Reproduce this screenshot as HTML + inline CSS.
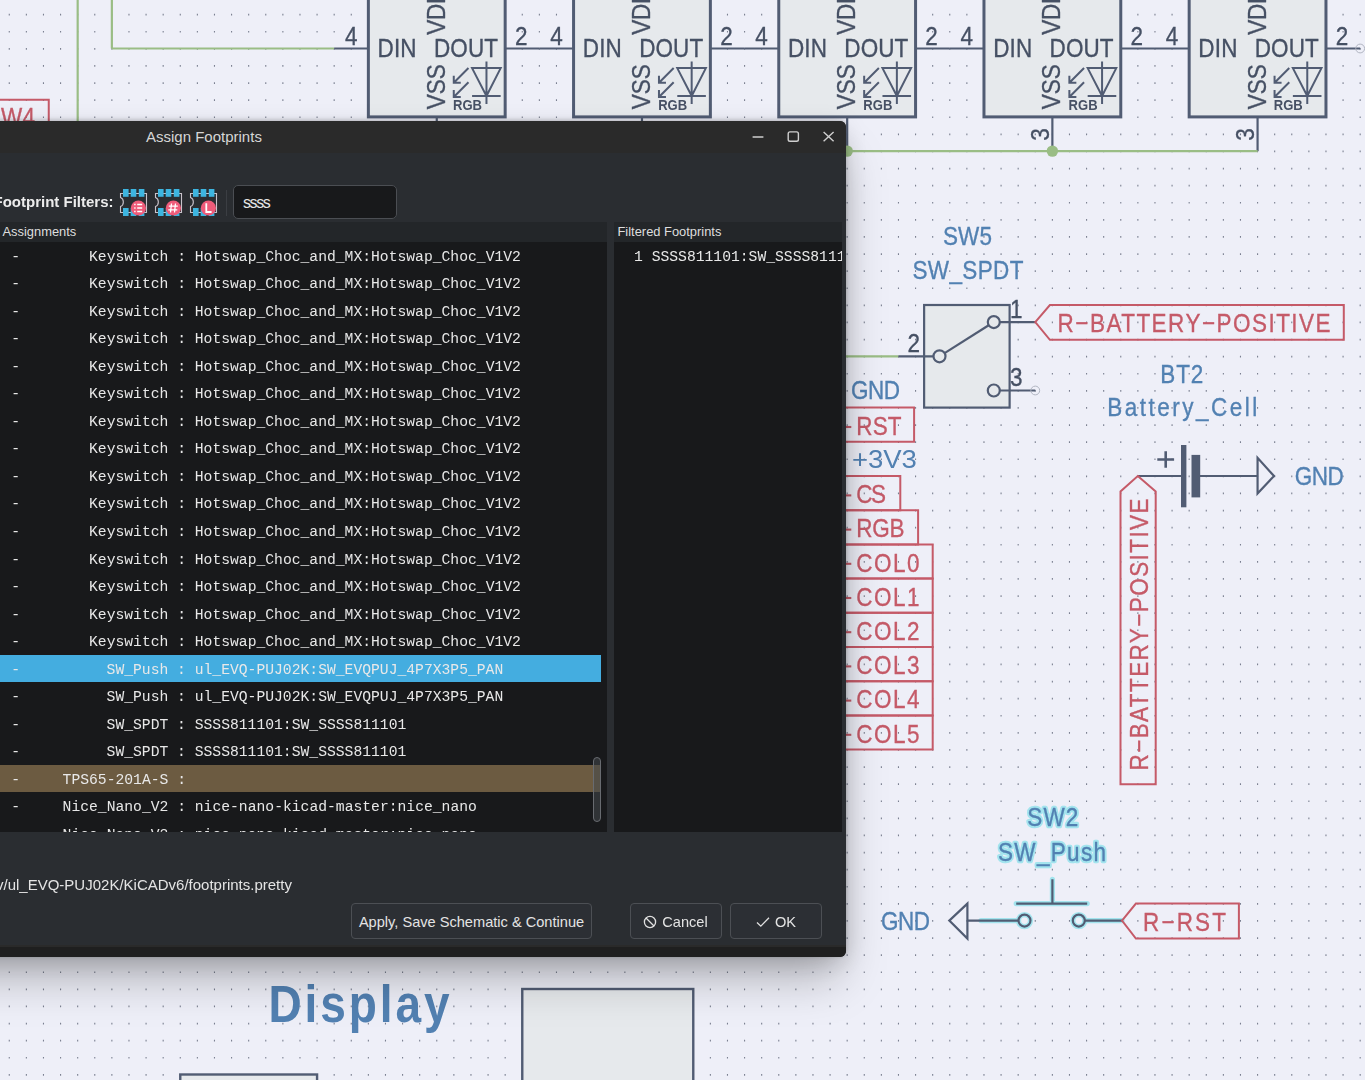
<!DOCTYPE html><html><head><meta charset="utf-8"><style>
html,body{margin:0;padding:0;width:1365px;height:1080px;overflow:hidden;background:#eeeff8;font-family:"Liberation Sans", sans-serif}
#shadow{position:absolute;left:-440px;top:125px;width:1285px;height:832px;box-shadow:0 26px 44px -6px rgba(0,0,0,0.27), 0 4px 26px 0 rgba(0,0,0,0.17);border-radius:6px}
#dlg{position:absolute;left:-436px;top:121.3px;width:1281.8px;height:836.2px;background:#2a2d31;box-shadow:0 -1px 4px rgba(0,0,0,0.22);border-radius:6px 6px 6px 6px;overflow:hidden}
#title{position:absolute;left:0;top:0;width:100%;height:31.3px;background:#2a2a2a;color:#d6d6d6;font-size:15px;line-height:31.3px}
#title{text-indent:582px}
#body{position:absolute;left:436px;top:31.3px;width:845.8px;height:793.7px;background:#2a2d31}
#bottomband{position:absolute;left:0;top:823.6px;width:100%;height:12.6px;background:#1f1f1f;border-top:2px solid #2a2a2a;box-sizing:border-box}
#fflabel{position:absolute;right:732.3px;top:161px;font-weight:700;font-size:15px;color:#ececec;white-space:nowrap}
#fflabel{top:40.7px}
#sep{position:absolute;left:225.7px;top:37px;width:1px;height:26.5px;background:#3b3e43}
#search{position:absolute;left:232.9px;top:32.9px;width:163.7px;height:33.7px;box-sizing:border-box;border:1px solid #4b4e53;border-radius:5px;background:#18191b;color:#e6e6e6;font-size:16px;letter-spacing:-1.35px;line-height:33px;padding-left:9px}
#lpanel{position:absolute;left:-10px;top:69.4px;width:616.9px;height:609.8px;background:#18191b;overflow:hidden}
#rpanel{position:absolute;left:613.5px;top:69.4px;width:228.8px;height:609.8px;background:#18191b;overflow:hidden}
.hdr{position:absolute;left:0;top:0;right:0;height:19.7px;background:#232629;color:#dedede;font-size:12.9px;line-height:20px;padding-left:12.5px;white-space:nowrap}
.list{position:absolute;left:0;top:19.7px;right:0;bottom:0;overflow:hidden}
.row{position:absolute;left:0;right:0;height:27.6px;font-family:"Liberation Mono", monospace;font-size:14.7px;line-height:30.4px;color:#e8e8e8;white-space:pre}
#lpanel .row{left:0}
.dash{position:absolute;left:21.3px}
.val{position:absolute;right:410.9px;text-align:right}
.fp{position:absolute;left:204.5px}
#sbar{position:absolute;left:603.2px;top:515.8px;width:7.6px;height:65px;border:1px solid #686b70;border-radius:5px;background:rgba(70,73,77,0.55);box-sizing:border-box}
#path{position:absolute;left:-4px;top:723.9px;color:#e4e4e4;font-size:15px;white-space:nowrap}
.btn{position:absolute;top:750.4px;height:36.5px;box-sizing:border-box;border:1px solid #4c4f54;border-radius:4px;background:#2c2f34;color:#e4e4e4;font-size:14.6px;line-height:37px;text-align:center;white-space:nowrap}
</style></head><body><svg width="1365" height="1080" viewBox="0 0 1365 1080" style="position:absolute;left:0;top:0;will-change:transform" font-family="Liberation Sans, sans-serif"><defs><filter id="glow" x="-20%" y="-50%" width="140%" height="200%">
<feMorphology in="SourceAlpha" operator="dilate" radius="2" result="d"/>
<feGaussianBlur in="d" stdDeviation="0.8" result="b"/>
<feFlood flood-color="#86dcef"/><feComposite in2="b" operator="in" result="g"/>
<feMerge><feMergeNode in="g"/><feMergeNode in="SourceGraphic"/></feMerge></filter></defs><path d="M8.72 14.65H1366M8.72 31.75H1366M8.72 48.85H1366M8.72 65.95H1366M8.72 83.05H1366M8.72 100.15H1366M8.72 117.25H1366M8.72 134.35H1366M8.72 151.45H1366M8.72 168.55H1366M8.72 185.65H1366M8.72 202.75H1366M8.72 219.85H1366M8.72 236.95H1366M8.72 254.05H1366M8.72 271.15H1366M8.72 288.25H1366M8.72 305.35H1366M8.72 322.45H1366M8.72 339.55H1366M8.72 356.65H1366M8.72 373.75H1366M8.72 390.85H1366M8.72 407.95H1366M8.72 425.05H1366M8.72 442.15H1366M8.72 459.25H1366M8.72 476.35H1366M8.72 493.45H1366M8.72 510.55H1366M8.72 527.65H1366M8.72 544.75H1366M8.72 561.85H1366M8.72 578.95H1366M8.72 596.05H1366M8.72 613.15H1366M8.72 630.25H1366M8.72 647.35H1366M8.72 664.45H1366M8.72 681.55H1366M8.72 698.65H1366M8.72 715.75H1366M8.72 732.85H1366M8.72 749.95H1366M8.72 767.05H1366M8.72 784.15H1366M8.72 801.25H1366M8.72 818.35H1366M8.72 835.45H1366M8.72 852.55H1366M8.72 869.65H1366M8.72 886.75H1366M8.72 903.85H1366M8.72 920.95H1366M8.72 938.05H1366M8.72 955.15H1366M8.72 972.25H1366M8.72 989.35H1366M8.72 1006.45H1366M8.72 1023.55H1366M8.72 1040.65H1366M8.72 1057.75H1366M8.72 1074.85H1366M8.72 1091.95H1366" stroke="#7b8091" stroke-width="1.7" stroke-dasharray="1.1 16" fill="none"/><line x1="77.67" y1="-5" x2="77.67" y2="125" stroke="#9abd85" stroke-width="2.2" /><line x1="111.87" y1="-5" x2="111.87" y2="48.5" stroke="#9abd85" stroke-width="2.2" /><line x1="111.87" y1="48.5" x2="334.17" y2="48.5" stroke="#9abd85" stroke-width="2.2" /><path d="M-10 99.8H48.75V130" stroke="#c55a68" stroke-width="2" fill="none"/><text x="0" y="0" font-size="22.5" fill="#c55a68" textLength="34" lengthAdjust="spacing" stroke="#c55a68" stroke-width="0.3" transform="translate(1 126) scale(1 1.17)" >W4</text><rect x="368.37" y="-20" width="136.8" height="136.9" fill="#e6e9ec" stroke="#515c73" stroke-width="3"/><line x1="334.17" y1="48.5" x2="368.37" y2="48.5" stroke="#515c73" stroke-width="2.2" /><line x1="505.17" y1="48.5" x2="539.37" y2="48.5" stroke="#515c73" stroke-width="2.2" /><line x1="436.77" y1="116.9" x2="436.77" y2="151.1" stroke="#515c73" stroke-width="2.2" /><text x="0" y="0" font-size="22.5" fill="#465064" textLength="14" lengthAdjust="spacing" stroke="#465064" stroke-width="0.3" transform="translate(344.97 44.7) scale(1 1.17)" >4</text><text x="0" y="0" font-size="22.5" fill="#465064" textLength="14" lengthAdjust="spacing" stroke="#465064" stroke-width="0.3" transform="translate(514.97 44.7) scale(1 1.17)" >2</text><text x="0" y="0" font-size="22.5" fill="#465064" textLength="39" lengthAdjust="spacing" stroke="#465064" stroke-width="0.3" transform="translate(377.57 57.1) scale(1 1.17)" >DIN</text><text x="0" y="0" font-size="22.5" fill="#465064" textLength="64" lengthAdjust="spacing" stroke="#465064" stroke-width="0.3" transform="translate(433.97 57.1) scale(1 1.17)" >DOUT</text><text x="0" y="0" font-size="22.5" fill="#465064" textLength="47" lengthAdjust="spacing" stroke="#465064" stroke-width="0.3" transform="translate(444.77 34.7) rotate(-90) scale(1 1.17)" >VDD</text><text x="0" y="0" font-size="22.5" fill="#465064" textLength="45" lengthAdjust="spacing" stroke="#465064" stroke-width="0.3" transform="translate(444.77 109.2) rotate(-90) scale(1 1.17)" >VSS</text><text x="0" y="0" font-size="22.5" fill="#465064" textLength="13" lengthAdjust="spacing" stroke="#465064" stroke-width="0.3" transform="translate(433.57 140.7) rotate(-90) scale(1 1.17)" >3</text><path d="M472.07 68.1H500.67L486.47 96ZM472.07 96H500.67M486.47 61.5V104" stroke="#515c73" stroke-width="2" fill="none"/><path d="M468.47 68L453.77 82.8M453.77 75.8L453.77 82.8L460.77 82.8" stroke="#515c73" stroke-width="2" fill="none"/><path d="M468.47 82.2L453.77 97M453.77 90L453.77 97L460.77 97" stroke="#515c73" stroke-width="2" fill="none"/><text x="452.97" y="110" font-size="15" fill="#465064" textLength="29" lengthAdjust="spacingAndGlyphs" font-weight="700" >RGB</text><rect x="573.57" y="-20" width="136.8" height="136.9" fill="#e6e9ec" stroke="#515c73" stroke-width="3"/><line x1="539.37" y1="48.5" x2="573.57" y2="48.5" stroke="#515c73" stroke-width="2.2" /><line x1="710.37" y1="48.5" x2="744.57" y2="48.5" stroke="#515c73" stroke-width="2.2" /><line x1="641.97" y1="116.9" x2="641.97" y2="151.1" stroke="#515c73" stroke-width="2.2" /><text x="0" y="0" font-size="22.5" fill="#465064" textLength="14" lengthAdjust="spacing" stroke="#465064" stroke-width="0.3" transform="translate(550.17 44.7) scale(1 1.17)" >4</text><text x="0" y="0" font-size="22.5" fill="#465064" textLength="14" lengthAdjust="spacing" stroke="#465064" stroke-width="0.3" transform="translate(720.17 44.7) scale(1 1.17)" >2</text><text x="0" y="0" font-size="22.5" fill="#465064" textLength="39" lengthAdjust="spacing" stroke="#465064" stroke-width="0.3" transform="translate(582.77 57.1) scale(1 1.17)" >DIN</text><text x="0" y="0" font-size="22.5" fill="#465064" textLength="64" lengthAdjust="spacing" stroke="#465064" stroke-width="0.3" transform="translate(639.17 57.1) scale(1 1.17)" >DOUT</text><text x="0" y="0" font-size="22.5" fill="#465064" textLength="47" lengthAdjust="spacing" stroke="#465064" stroke-width="0.3" transform="translate(649.97 34.7) rotate(-90) scale(1 1.17)" >VDD</text><text x="0" y="0" font-size="22.5" fill="#465064" textLength="45" lengthAdjust="spacing" stroke="#465064" stroke-width="0.3" transform="translate(649.97 109.2) rotate(-90) scale(1 1.17)" >VSS</text><text x="0" y="0" font-size="22.5" fill="#465064" textLength="13" lengthAdjust="spacing" stroke="#465064" stroke-width="0.3" transform="translate(638.77 140.7) rotate(-90) scale(1 1.17)" >3</text><path d="M677.27 68.1H705.87L691.67 96ZM677.27 96H705.87M691.67 61.5V104" stroke="#515c73" stroke-width="2" fill="none"/><path d="M673.67 68L658.97 82.8M658.97 75.8L658.97 82.8L665.97 82.8" stroke="#515c73" stroke-width="2" fill="none"/><path d="M673.67 82.2L658.97 97M658.97 90L658.97 97L665.97 97" stroke="#515c73" stroke-width="2" fill="none"/><text x="658.17" y="110" font-size="15" fill="#465064" textLength="29" lengthAdjust="spacingAndGlyphs" font-weight="700" >RGB</text><rect x="778.77" y="-20" width="136.8" height="136.9" fill="#e6e9ec" stroke="#515c73" stroke-width="3"/><line x1="744.57" y1="48.5" x2="778.77" y2="48.5" stroke="#515c73" stroke-width="2.2" /><line x1="915.57" y1="48.5" x2="949.77" y2="48.5" stroke="#515c73" stroke-width="2.2" /><line x1="847.17" y1="116.9" x2="847.17" y2="151.1" stroke="#515c73" stroke-width="2.2" /><text x="0" y="0" font-size="22.5" fill="#465064" textLength="14" lengthAdjust="spacing" stroke="#465064" stroke-width="0.3" transform="translate(755.37 44.7) scale(1 1.17)" >4</text><text x="0" y="0" font-size="22.5" fill="#465064" textLength="14" lengthAdjust="spacing" stroke="#465064" stroke-width="0.3" transform="translate(925.37 44.7) scale(1 1.17)" >2</text><text x="0" y="0" font-size="22.5" fill="#465064" textLength="39" lengthAdjust="spacing" stroke="#465064" stroke-width="0.3" transform="translate(787.97 57.1) scale(1 1.17)" >DIN</text><text x="0" y="0" font-size="22.5" fill="#465064" textLength="64" lengthAdjust="spacing" stroke="#465064" stroke-width="0.3" transform="translate(844.37 57.1) scale(1 1.17)" >DOUT</text><text x="0" y="0" font-size="22.5" fill="#465064" textLength="47" lengthAdjust="spacing" stroke="#465064" stroke-width="0.3" transform="translate(855.17 34.7) rotate(-90) scale(1 1.17)" >VDD</text><text x="0" y="0" font-size="22.5" fill="#465064" textLength="45" lengthAdjust="spacing" stroke="#465064" stroke-width="0.3" transform="translate(855.17 109.2) rotate(-90) scale(1 1.17)" >VSS</text><text x="0" y="0" font-size="22.5" fill="#465064" textLength="13" lengthAdjust="spacing" stroke="#465064" stroke-width="0.3" transform="translate(843.97 140.7) rotate(-90) scale(1 1.17)" >3</text><path d="M882.47 68.1H911.07L896.87 96ZM882.47 96H911.07M896.87 61.5V104" stroke="#515c73" stroke-width="2" fill="none"/><path d="M878.87 68L864.17 82.8M864.17 75.8L864.17 82.8L871.17 82.8" stroke="#515c73" stroke-width="2" fill="none"/><path d="M878.87 82.2L864.17 97M864.17 90L864.17 97L871.17 97" stroke="#515c73" stroke-width="2" fill="none"/><text x="863.37" y="110" font-size="15" fill="#465064" textLength="29" lengthAdjust="spacingAndGlyphs" font-weight="700" >RGB</text><rect x="983.97" y="-20" width="136.8" height="136.9" fill="#e6e9ec" stroke="#515c73" stroke-width="3"/><line x1="949.77" y1="48.5" x2="983.97" y2="48.5" stroke="#515c73" stroke-width="2.2" /><line x1="1120.77" y1="48.5" x2="1154.97" y2="48.5" stroke="#515c73" stroke-width="2.2" /><line x1="1052.37" y1="116.9" x2="1052.37" y2="151.1" stroke="#515c73" stroke-width="2.2" /><text x="0" y="0" font-size="22.5" fill="#465064" textLength="14" lengthAdjust="spacing" stroke="#465064" stroke-width="0.3" transform="translate(960.57 44.7) scale(1 1.17)" >4</text><text x="0" y="0" font-size="22.5" fill="#465064" textLength="14" lengthAdjust="spacing" stroke="#465064" stroke-width="0.3" transform="translate(1130.57 44.7) scale(1 1.17)" >2</text><text x="0" y="0" font-size="22.5" fill="#465064" textLength="39" lengthAdjust="spacing" stroke="#465064" stroke-width="0.3" transform="translate(993.17 57.1) scale(1 1.17)" >DIN</text><text x="0" y="0" font-size="22.5" fill="#465064" textLength="64" lengthAdjust="spacing" stroke="#465064" stroke-width="0.3" transform="translate(1049.57 57.1) scale(1 1.17)" >DOUT</text><text x="0" y="0" font-size="22.5" fill="#465064" textLength="47" lengthAdjust="spacing" stroke="#465064" stroke-width="0.3" transform="translate(1060.37 34.7) rotate(-90) scale(1 1.17)" >VDD</text><text x="0" y="0" font-size="22.5" fill="#465064" textLength="45" lengthAdjust="spacing" stroke="#465064" stroke-width="0.3" transform="translate(1060.37 109.2) rotate(-90) scale(1 1.17)" >VSS</text><text x="0" y="0" font-size="22.5" fill="#465064" textLength="13" lengthAdjust="spacing" stroke="#465064" stroke-width="0.3" transform="translate(1049.17 140.7) rotate(-90) scale(1 1.17)" >3</text><path d="M1087.67 68.1H1116.27L1102.07 96ZM1087.67 96H1116.27M1102.07 61.5V104" stroke="#515c73" stroke-width="2" fill="none"/><path d="M1084.07 68L1069.37 82.8M1069.37 75.8L1069.37 82.8L1076.37 82.8" stroke="#515c73" stroke-width="2" fill="none"/><path d="M1084.07 82.2L1069.37 97M1069.37 90L1069.37 97L1076.37 97" stroke="#515c73" stroke-width="2" fill="none"/><text x="1068.57" y="110" font-size="15" fill="#465064" textLength="29" lengthAdjust="spacingAndGlyphs" font-weight="700" >RGB</text><rect x="1189.17" y="-20" width="136.8" height="136.9" fill="#e6e9ec" stroke="#515c73" stroke-width="3"/><line x1="1154.97" y1="48.5" x2="1189.17" y2="48.5" stroke="#515c73" stroke-width="2.2" /><line x1="1325.97" y1="48.5" x2="1360.17" y2="48.5" stroke="#515c73" stroke-width="2.2" /><line x1="1257.57" y1="116.9" x2="1257.57" y2="151.1" stroke="#515c73" stroke-width="2.2" /><text x="0" y="0" font-size="22.5" fill="#465064" textLength="14" lengthAdjust="spacing" stroke="#465064" stroke-width="0.3" transform="translate(1165.77 44.7) scale(1 1.17)" >4</text><text x="0" y="0" font-size="22.5" fill="#465064" textLength="14" lengthAdjust="spacing" stroke="#465064" stroke-width="0.3" transform="translate(1335.77 44.7) scale(1 1.17)" >2</text><text x="0" y="0" font-size="22.5" fill="#465064" textLength="39" lengthAdjust="spacing" stroke="#465064" stroke-width="0.3" transform="translate(1198.37 57.1) scale(1 1.17)" >DIN</text><text x="0" y="0" font-size="22.5" fill="#465064" textLength="64" lengthAdjust="spacing" stroke="#465064" stroke-width="0.3" transform="translate(1254.77 57.1) scale(1 1.17)" >DOUT</text><text x="0" y="0" font-size="22.5" fill="#465064" textLength="47" lengthAdjust="spacing" stroke="#465064" stroke-width="0.3" transform="translate(1265.57 34.7) rotate(-90) scale(1 1.17)" >VDD</text><text x="0" y="0" font-size="22.5" fill="#465064" textLength="45" lengthAdjust="spacing" stroke="#465064" stroke-width="0.3" transform="translate(1265.57 109.2) rotate(-90) scale(1 1.17)" >VSS</text><text x="0" y="0" font-size="22.5" fill="#465064" textLength="13" lengthAdjust="spacing" stroke="#465064" stroke-width="0.3" transform="translate(1254.37 140.7) rotate(-90) scale(1 1.17)" >3</text><path d="M1292.87 68.1H1321.47L1307.27 96ZM1292.87 96H1321.47M1307.27 61.5V104" stroke="#515c73" stroke-width="2" fill="none"/><path d="M1289.27 68L1274.57 82.8M1274.57 75.8L1274.57 82.8L1281.57 82.8" stroke="#515c73" stroke-width="2" fill="none"/><path d="M1289.27 82.2L1274.57 97M1274.57 90L1274.57 97L1281.57 97" stroke="#515c73" stroke-width="2" fill="none"/><text x="1273.77" y="110" font-size="15" fill="#465064" textLength="29" lengthAdjust="spacingAndGlyphs" font-weight="700" >RGB</text><line x1="800" y1="151.1" x2="1257.57" y2="151.1" stroke="#9abd85" stroke-width="2.4" /><circle cx="847.17" cy="151.1" r="5.7" fill="#9abd85"/><circle cx="1052.37" cy="151.1" r="5.7" fill="#9abd85"/><circle cx="1360.17" cy="48.5" r="4.4" fill="none" stroke="#b0b4c0" stroke-width="1"/><text x="0" y="0" font-size="22.5" fill="#5281b2" textLength="49" lengthAdjust="spacing" stroke="#5281b2" stroke-width="0.3" transform="translate(942.9 245.3) scale(1 1.17)" >SW5</text><text x="0" y="0" font-size="22.5" fill="#5281b2" textLength="111" lengthAdjust="spacing" stroke="#5281b2" stroke-width="0.3" transform="translate(912.4 279) scale(1 1.17)" >SW_SPDT</text><rect x="924.12" y="305" width="85.5" height="102.6" fill="#e6e9ec" stroke="#515c73" stroke-width="2.2"/><line x1="800" y1="356.3" x2="898.47" y2="356.3" stroke="#9abd85" stroke-width="2.2" /><line x1="898.47" y1="356.3" x2="933.5" y2="356.3" stroke="#515c73" stroke-width="2.2" /><circle cx="939.5" cy="356.3" r="6" fill="none" stroke="#515c73" stroke-width="2.2"/><circle cx="993.8" cy="322.1" r="6" fill="none" stroke="#515c73" stroke-width="2.2"/><circle cx="993.8" cy="390.5" r="6" fill="none" stroke="#515c73" stroke-width="2.2"/><line x1="999.8" y1="322.1" x2="1035.27" y2="322.1" stroke="#515c73" stroke-width="2.2" /><line x1="999.8" y1="390.5" x2="1035.27" y2="390.5" stroke="#515c73" stroke-width="2.2" /><line x1="944.6" y1="353.1" x2="988.7" y2="325.3" stroke="#515c73" stroke-width="2.2" /><circle cx="1035.27" cy="390.5" r="4.4" fill="none" stroke="#b0b4c0" stroke-width="1"/><text x="0" y="0" font-size="22.5" fill="#465064" textLength="14" lengthAdjust="spacing" stroke="#465064" stroke-width="0.3" transform="translate(1010 318) scale(1 1.17)" >1</text><text x="0" y="0" font-size="22.5" fill="#465064" textLength="14" lengthAdjust="spacing" stroke="#465064" stroke-width="0.3" transform="translate(907.5 352) scale(1 1.17)" >2</text><text x="0" y="0" font-size="22.5" fill="#465064" textLength="14" lengthAdjust="spacing" stroke="#465064" stroke-width="0.3" transform="translate(1010 386) scale(1 1.17)" >3</text><text x="0" y="0" font-size="22.5" fill="#5281b2" textLength="49" lengthAdjust="spacing" stroke="#5281b2" stroke-width="0.3" transform="translate(851 398.7) scale(1 1.17)" >GND</text><path d="M1035.27 322.1L1049.9 305H1343.8V339.8H1049.9Z" fill="none" stroke="#c55a68" stroke-width="2"/><text x="0" y="0" font-size="22.5" fill="#c55a68" textLength="273" lengthAdjust="spacing" stroke="#c55a68" stroke-width="0.3" transform="translate(1057.6 332.4) scale(1 1.17)" >R−BATTERY−POSITIVE</text><path d="M800 407.6H914.1V441.8H800" fill="none" stroke="#c55a68" stroke-width="2"/><line x1="836.5" y1="427" x2="851.3" y2="427" stroke="#c55a68" stroke-width="2.1" /><text x="0" y="0" font-size="22.5" fill="#c55a68" textLength="45.3" lengthAdjust="spacing" stroke="#c55a68" stroke-width="0.3" transform="translate(856.3 434.8) scale(1 1.17)" >RST</text><path d="M800 476H900.3V510.2H800" fill="none" stroke="#c55a68" stroke-width="2"/><line x1="836.5" y1="495.4" x2="851.3" y2="495.4" stroke="#c55a68" stroke-width="2.1" /><text x="0" y="0" font-size="22.5" fill="#c55a68" textLength="29.7" lengthAdjust="spacing" stroke="#c55a68" stroke-width="0.3" transform="translate(856.3 503.2) scale(1 1.17)" >CS</text><path d="M800 510.2H918.1V544.4H800" fill="none" stroke="#c55a68" stroke-width="2"/><line x1="836.5" y1="529.6" x2="851.3" y2="529.6" stroke="#c55a68" stroke-width="2.1" /><text x="0" y="0" font-size="22.5" fill="#c55a68" textLength="48.3" lengthAdjust="spacing" stroke="#c55a68" stroke-width="0.3" transform="translate(856.3 537.4) scale(1 1.17)" >RGB</text><path d="M800 544.4H932.7V578.6H800" fill="none" stroke="#c55a68" stroke-width="2"/><line x1="836.5" y1="563.8" x2="851.3" y2="563.8" stroke="#c55a68" stroke-width="2.1" /><text x="0" y="0" font-size="22.5" fill="#c55a68" textLength="63.1" lengthAdjust="spacing" stroke="#c55a68" stroke-width="0.3" transform="translate(856.3 571.6) scale(1 1.17)" >COL0</text><path d="M800 578.6H932.7V612.8H800" fill="none" stroke="#c55a68" stroke-width="2"/><line x1="836.5" y1="598" x2="851.3" y2="598" stroke="#c55a68" stroke-width="2.1" /><text x="0" y="0" font-size="22.5" fill="#c55a68" textLength="63.1" lengthAdjust="spacing" stroke="#c55a68" stroke-width="0.3" transform="translate(856.3 605.8) scale(1 1.17)" >COL1</text><path d="M800 612.8H932.7V647H800" fill="none" stroke="#c55a68" stroke-width="2"/><line x1="836.5" y1="632.2" x2="851.3" y2="632.2" stroke="#c55a68" stroke-width="2.1" /><text x="0" y="0" font-size="22.5" fill="#c55a68" textLength="63.1" lengthAdjust="spacing" stroke="#c55a68" stroke-width="0.3" transform="translate(856.3 640) scale(1 1.17)" >COL2</text><path d="M800 647H932.7V681.2H800" fill="none" stroke="#c55a68" stroke-width="2"/><line x1="836.5" y1="666.4" x2="851.3" y2="666.4" stroke="#c55a68" stroke-width="2.1" /><text x="0" y="0" font-size="22.5" fill="#c55a68" textLength="63.1" lengthAdjust="spacing" stroke="#c55a68" stroke-width="0.3" transform="translate(856.3 674.2) scale(1 1.17)" >COL3</text><path d="M800 681.2H932.7V715.4H800" fill="none" stroke="#c55a68" stroke-width="2"/><line x1="836.5" y1="700.6" x2="851.3" y2="700.6" stroke="#c55a68" stroke-width="2.1" /><text x="0" y="0" font-size="22.5" fill="#c55a68" textLength="63.1" lengthAdjust="spacing" stroke="#c55a68" stroke-width="0.3" transform="translate(856.3 708.4) scale(1 1.17)" >COL4</text><path d="M800 715.4H932.7V749.6H800" fill="none" stroke="#c55a68" stroke-width="2"/><line x1="836.5" y1="734.8" x2="851.3" y2="734.8" stroke="#c55a68" stroke-width="2.1" /><text x="0" y="0" font-size="22.5" fill="#c55a68" textLength="63.1" lengthAdjust="spacing" stroke="#c55a68" stroke-width="0.3" transform="translate(856.3 742.6) scale(1 1.17)" >COL5</text><text x="851.9" y="467.5" font-size="26" fill="#5281b2" textLength="65" lengthAdjust="spacingAndGlyphs" >+3V3</text><text x="0" y="0" font-size="22.5" fill="#5281b2" textLength="43" lengthAdjust="spacing" stroke="#5281b2" stroke-width="0.3" transform="translate(1160.3 382.7) scale(1 1.17)" >BT2</text><text x="0" y="0" font-size="22.5" fill="#5281b2" textLength="150" lengthAdjust="spacing" stroke="#5281b2" stroke-width="0.3" transform="translate(1107.3 416.3) scale(1 1.17)" >Battery_Cell</text><line x1="1137.87" y1="476" x2="1181" y2="476" stroke="#515c73" stroke-width="2.2" /><rect x="1181" y="445" width="5.4" height="62.3" fill="#515c73"/><rect x="1191.5" y="454.9" width="8.7" height="42.5" fill="#515c73"/><line x1="1200" y1="476" x2="1257.57" y2="476" stroke="#515c73" stroke-width="2.2" /><path d="M1257.57 457.8V493.4L1274 476Z" fill="none" stroke="#515c73" stroke-width="2.2" stroke-linejoin="miter"/><path d="M1157.3 459.5H1174.1M1165.7 451.3V467.7" stroke="#515c73" stroke-width="2.6"/><text x="0" y="0" font-size="22.5" fill="#5281b2" textLength="49" lengthAdjust="spacing" stroke="#5281b2" stroke-width="0.3" transform="translate(1294.8 484.5) scale(1 1.17)" >GND</text><path d="M1137.8 476L1155.7 491.5V784.3H1120.5V491.5Z" fill="none" stroke="#c55a68" stroke-width="2"/><text x="0" y="0" font-size="22.5" fill="#c55a68" textLength="272" lengthAdjust="spacing" stroke="#c55a68" stroke-width="0.3" transform="translate(1147.6 770.5) rotate(-90) scale(1 1.17)" >R−BATTERY−POSITIVE</text><path d="M949.3 920.6L967.4 903.6V938.6Z" fill="none" stroke="#515c73" stroke-width="2.2"/><g stroke="#a3e4ee" stroke-width="5.2" fill="none" stroke-linecap="round"><path d="M981 920.6H1018.5M1084.8 920.6H1122M1016.2 903.6H1087.2M1052.4 879.3V903.6"/><circle cx="1024.5" cy="920.6" r="6"/><circle cx="1078.8" cy="920.6" r="6"/></g><g stroke="#515c73" stroke-width="2.2" fill="none"><path d="M967.4 920.6H1018.5M1084.8 920.6H1122M1016.2 903.6H1087.2M1052.4 879.3V903.6"/><circle cx="1024.5" cy="920.6" r="6"/><circle cx="1078.8" cy="920.6" r="6"/></g><text x="0" y="0" font-size="22.5" fill="#5281b2" textLength="51" lengthAdjust="spacing" transform="translate(1027.3 826) scale(1 1.17)" stroke="#a3e4ee" stroke-width="4" stroke-linejoin="round">SW2</text><text x="0" y="0" font-size="22.5" fill="#5281b2" textLength="108" lengthAdjust="spacing" transform="translate(998 860.7) scale(1 1.17)" stroke="#a3e4ee" stroke-width="4" stroke-linejoin="round">SW_Push</text><text x="0" y="0" font-size="22.5" fill="#5281b2" textLength="51" lengthAdjust="spacing" stroke="#5281b2" stroke-width="0.3" transform="translate(1027.3 826) scale(1 1.17)" >SW2</text><text x="0" y="0" font-size="22.5" fill="#5281b2" textLength="108" lengthAdjust="spacing" stroke="#5281b2" stroke-width="0.3" transform="translate(998 860.7) scale(1 1.17)" >SW_Push</text><text x="0" y="0" font-size="22.5" fill="#5281b2" textLength="49" lengthAdjust="spacing" stroke="#5281b2" stroke-width="0.3" transform="translate(881 929.5) scale(1 1.17)" >GND</text><path d="M1122 920.6L1135.9 903.6H1238.9V938.6H1135.9Z" fill="none" stroke="#c55a68" stroke-width="2"/><text x="0" y="0" font-size="22.5" fill="#c55a68" textLength="83" lengthAdjust="spacing" stroke="#c55a68" stroke-width="0.3" transform="translate(1143 930.8) scale(1 1.17)" >R−RST</text><text x="0" y="0" font-size="46" font-weight="700" fill="#5281b2" textLength="181" lengthAdjust="spacing" transform="translate(268.5 1021.8) scale(1 1.13)">Display</text><rect x="522.27" y="989" width="171" height="200" fill="#e6e9ec" stroke="#515c73" stroke-width="2.4"/><rect x="180.27" y="1074.5" width="136.8" height="200" fill="#e6e9ec" stroke="#515c73" stroke-width="2.4"/></svg>
<div id="shadow"></div>
<div id="dlg">
 <div id="title">Assign Footprints</div>
 <svg style="position:absolute;left:1187px;top:8.7px" width="85" height="14" viewBox="0 0 85 14">
  <path d="M1.6 7.1H12.4" stroke="#cfcfcf" stroke-width="1.5"/>
  <rect x="37.2" y="1.9" width="10.2" height="9.3" rx="1.8" fill="none" stroke="#cfcfcf" stroke-width="1.4"/>
  <path d="M72.6 1.9L82.6 11.2M82.6 1.9L72.6 11.2" stroke="#cfcfcf" stroke-width="1.4"/>
 </svg>
 <div id="body">
  <div id="fflabel">Footprint Filters:</div>
  <svg style="position:absolute;left:118px;top:34.4px" width="31" height="32" viewBox="0 0 31 32">
<path d="M2.5 6.5H28.5V25.5H2.5V19.6C6.3 18.2 6.3 11.8 2.5 10.4Z" fill="none" stroke="#c9c3cb" stroke-width="1.1"/>
<rect x="5" y="2" width="5.6" height="7.8" fill="#3db5e0"/><rect x="12.7" y="2" width="5.6" height="7.8" fill="#3db5e0"/><rect x="20.8" y="2" width="5.6" height="7.8" fill="#3db5e0"/>
<rect x="5" y="21" width="5.6" height="8" fill="#3db5e0"/><rect x="12.7" y="21" width="5.6" height="8" fill="#3db5e0"/><rect x="20.8" y="21" width="5.6" height="8" fill="#3db5e0"/>
<circle cx="20.4" cy="21" r="7.6" fill="#ee5b79"/><path d="M16.2 17.5h1.4M19.2 17.5h5M16.2 21h1.4M19.2 21h5M16.2 24.5h1.4M19.2 24.5h5" stroke="#fff" stroke-width="1.6"/></svg><svg style="position:absolute;left:153px;top:34.4px" width="31" height="32" viewBox="0 0 31 32">
<path d="M2.5 6.5H28.5V25.5H2.5V19.6C6.3 18.2 6.3 11.8 2.5 10.4Z" fill="none" stroke="#c9c3cb" stroke-width="1.1"/>
<rect x="5" y="2" width="5.6" height="7.8" fill="#3db5e0"/><rect x="12.7" y="2" width="5.6" height="7.8" fill="#3db5e0"/><rect x="20.8" y="2" width="5.6" height="7.8" fill="#3db5e0"/>
<rect x="5" y="21" width="5.6" height="8" fill="#3db5e0"/><rect x="12.7" y="21" width="5.6" height="8" fill="#3db5e0"/><rect x="20.8" y="21" width="5.6" height="8" fill="#3db5e0"/>
<circle cx="20.4" cy="21" r="7.6" fill="#ee5b79"/><path d="M18.5 16.5L17.5 25.5M22.5 16.5L21.5 25.5M15.8 19.2H24.8M15.3 22.8H24.3" stroke="#fff" stroke-width="1.3"/></svg><svg style="position:absolute;left:188.4px;top:34.4px" width="31" height="32" viewBox="0 0 31 32">
<path d="M2.5 6.5H28.5V25.5H2.5V19.6C6.3 18.2 6.3 11.8 2.5 10.4Z" fill="none" stroke="#c9c3cb" stroke-width="1.1"/>
<rect x="5" y="2" width="5.6" height="7.8" fill="#3db5e0"/><rect x="12.7" y="2" width="5.6" height="7.8" fill="#3db5e0"/><rect x="20.8" y="2" width="5.6" height="7.8" fill="#3db5e0"/>
<rect x="5" y="21" width="5.6" height="8" fill="#3db5e0"/><rect x="12.7" y="21" width="5.6" height="8" fill="#3db5e0"/><rect x="20.8" y="21" width="5.6" height="8" fill="#3db5e0"/>
<circle cx="20.4" cy="21" r="7.6" fill="#ee5b79"/><path d="M18.3 16.2V25H23.6" fill="none" stroke="#fff" stroke-width="1.8"/></svg>
  <div id="sep"></div>
  <div id="search">ssss</div>
  <div id="lpanel">
   <div class="hdr">Assignments</div>
   <div class="list"><div class="row" style="top:0px;"><span class="dash">-</span><span style="position:absolute;left:99px">Keyswitch : Hotswap_Choc_and_MX:Hotswap_Choc_V1V2</span></div><div class="row" style="top:27.53px;"><span class="dash">-</span><span style="position:absolute;left:99px">Keyswitch : Hotswap_Choc_and_MX:Hotswap_Choc_V1V2</span></div><div class="row" style="top:55.06px;"><span class="dash">-</span><span style="position:absolute;left:99px">Keyswitch : Hotswap_Choc_and_MX:Hotswap_Choc_V1V2</span></div><div class="row" style="top:82.59px;"><span class="dash">-</span><span style="position:absolute;left:99px">Keyswitch : Hotswap_Choc_and_MX:Hotswap_Choc_V1V2</span></div><div class="row" style="top:110.12px;"><span class="dash">-</span><span style="position:absolute;left:99px">Keyswitch : Hotswap_Choc_and_MX:Hotswap_Choc_V1V2</span></div><div class="row" style="top:137.65px;"><span class="dash">-</span><span style="position:absolute;left:99px">Keyswitch : Hotswap_Choc_and_MX:Hotswap_Choc_V1V2</span></div><div class="row" style="top:165.18px;"><span class="dash">-</span><span style="position:absolute;left:99px">Keyswitch : Hotswap_Choc_and_MX:Hotswap_Choc_V1V2</span></div><div class="row" style="top:192.71px;"><span class="dash">-</span><span style="position:absolute;left:99px">Keyswitch : Hotswap_Choc_and_MX:Hotswap_Choc_V1V2</span></div><div class="row" style="top:220.24px;"><span class="dash">-</span><span style="position:absolute;left:99px">Keyswitch : Hotswap_Choc_and_MX:Hotswap_Choc_V1V2</span></div><div class="row" style="top:247.77px;"><span class="dash">-</span><span style="position:absolute;left:99px">Keyswitch : Hotswap_Choc_and_MX:Hotswap_Choc_V1V2</span></div><div class="row" style="top:275.3px;"><span class="dash">-</span><span style="position:absolute;left:99px">Keyswitch : Hotswap_Choc_and_MX:Hotswap_Choc_V1V2</span></div><div class="row" style="top:302.83px;"><span class="dash">-</span><span style="position:absolute;left:99px">Keyswitch : Hotswap_Choc_and_MX:Hotswap_Choc_V1V2</span></div><div class="row" style="top:330.36px;"><span class="dash">-</span><span style="position:absolute;left:99px">Keyswitch : Hotswap_Choc_and_MX:Hotswap_Choc_V1V2</span></div><div class="row" style="top:357.89px;"><span class="dash">-</span><span style="position:absolute;left:99px">Keyswitch : Hotswap_Choc_and_MX:Hotswap_Choc_V1V2</span></div><div class="row" style="top:385.42px;"><span class="dash">-</span><span style="position:absolute;left:99px">Keyswitch : Hotswap_Choc_and_MX:Hotswap_Choc_V1V2</span></div><div class="row" style="top:412.95px;background:#44ade0;right:6px;"><span class="dash">-</span><span style="position:absolute;left:116.6px">SW_Push : ul_EVQ-PUJ02K:SW_EVQPUJ_4P7X3P5_PAN</span></div><div class="row" style="top:440.48px;"><span class="dash">-</span><span style="position:absolute;left:116.6px">SW_Push : ul_EVQ-PUJ02K:SW_EVQPUJ_4P7X3P5_PAN</span></div><div class="row" style="top:468.01px;"><span class="dash">-</span><span style="position:absolute;left:116.6px">SW_SPDT : SSSS811101:SW_SSSS811101</span></div><div class="row" style="top:495.54px;"><span class="dash">-</span><span style="position:absolute;left:116.6px">SW_SPDT : SSSS811101:SW_SSSS811101</span></div><div class="row" style="top:523.07px;background:#6c5b41;right:6px;"><span class="dash">-</span><span style="position:absolute;left:72.6px">TPS65-201A-S : </span></div><div class="row" style="top:550.6px;"><span class="dash">-</span><span style="position:absolute;left:72.6px">Nice_Nano_V2 : nice-nano-kicad-master:nice_nano</span></div><div class="row" style="top:578.13px;"><span class="dash">-</span><span style="position:absolute;left:72.6px">Nice_Nano_V2 : nice-nano-kicad-master:nice_nano</span></div>
    <div id="sbar"></div>
   </div>
  </div>
  <div id="rpanel">
   <div class="hdr" style="padding-left:4px">Filtered Footprints</div>
   <div class="list"><div class="row" style="top:0"><span style="position:absolute;left:20.5px">1 SSSS811101:SW_SSSS811101</span></div></div>
  </div>
  <div id="path">v/ul_EVQ-PUJ02K/KiCADv6/footprints.pretty</div>
  <div class="btn" style="left:351px;width:241px">Apply, Save Schematic &amp; Continue</div>
  <div class="btn" style="left:629.5px;width:92px"><svg width="14" height="14" viewBox="0 0 14 14" style="vertical-align:-2px;margin-right:5px"><circle cx="7" cy="7" r="5.6" fill="none" stroke="#e0e0e0" stroke-width="1.3"/><path d="M3 3L11 11" stroke="#e0e0e0" stroke-width="1.3"/></svg>Cancel</div>
  <div class="btn" style="left:730px;width:92px"><svg width="14" height="14" viewBox="0 0 14 14" style="vertical-align:-2px;margin-right:5px"><path d="M1 7.5L4.8 11.2L13 2.8" fill="none" stroke="#e0e0e0" stroke-width="1.3"/></svg>OK</div>
 </div>
 <div id="bottomband"></div>
</div>
</body></html>
